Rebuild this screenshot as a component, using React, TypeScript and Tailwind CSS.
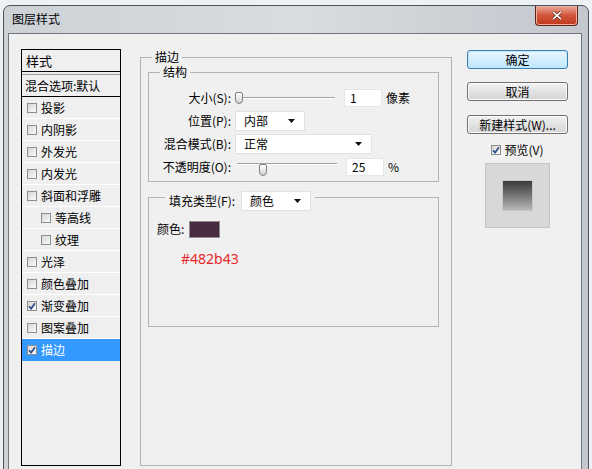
import type { ReactNode } from 'react'

type Layer = { name: string; checked?: boolean; sub?: boolean; active?: boolean }

const layers: Layer[] = [
    { name: '投影' },
    { name: '内阴影' },
    { name: '外发光' },
    { name: '内发光' },
    { name: '斜面和浮雕' },
    { name: '等高线', sub: true },
    { name: '纹理', sub: true },
    { name: '光泽' },
    { name: '颜色叠加' },
    { name: '渐变叠加', checked: true },
    { name: '图案叠加' },
    { name: '描边', checked: true, active: true },
]

function Check({ checked = false }: { checked?: boolean }) {
    return (
        <span className="flex h-[10px] w-[10px] shrink-0 items-center justify-center border border-[#8e8f8f] bg-gradient-to-br from-[#d6d6d6] to-[#fafafa]">
            {checked && (
                <svg viewBox="0 0 8 8" className="h-[8px] w-[8px]">
                    <path d="M1 4.2 L3.1 6.6 L7 1.2" fill="none" stroke="#2b4c8c" strokeWidth="1.7" />
                </svg>
            )}
        </span>
    )
}

function Arrow() {
    return (
        <svg viewBox="0 0 7 4" className="h-[4px] w-[7px]">
            <path d="M0 0 H7 L3.5 4 Z" fill="#111" />
        </svg>
    )
}

function Select({ value, width }: { value: string; width: string }) {
    return (
        <div className={`flex h-[20px] items-center justify-between border border-[#e2e2e2] bg-white pl-[8px] pr-[9px] text-[12px] ${width}`}>
            <span>{value}</span>
            <Arrow />
        </div>
    )
}

function Slider({ thumb }: { thumb: string }) {
    return (
        <div className="relative h-[14px] w-[100px]">
            <div className="mt-[6px] h-[2px] border-t border-b border-t-[#a3a3a3] border-b-white" />
            <div className={`absolute top-[1px] h-[12px] w-[8px] rounded-t-[2px] rounded-b-[4px] border border-[#808080] bg-gradient-to-b from-white to-[#d2d2d2] ${thumb}`} />
        </div>
    )
}

function Field({ value }: { value: string }) {
    return (
        <div className="flex h-[18px] w-[38px] items-center border border-[#e6e6e6] bg-white pl-[5px] text-[12px]">
            {value}
        </div>
    )
}

function Row({ label, children }: { label: string; children: ReactNode }) {
    return (
        <div className="flex h-[20px] items-center">
            <span className="w-[82px] text-right text-[12px]">{label}</span>
            <div className="ml-[4px] flex items-center">{children}</div>
        </div>
    )
}

function Button({ children, primary = false }: { children: ReactNode; primary?: boolean }) {
    return (
        <button
            className={
                primary
                    ? 'h-[19px] w-[101px] rounded-[3px] border border-[#3c7fb1] bg-gradient-to-b from-[#eaf6fd] to-[#bee6fd] text-[12px] leading-[17px] shadow-[inset_0_0_0_1px_#bfe6fb]'
                    : 'h-[19px] w-[101px] rounded-[3px] border border-[#707070] bg-gradient-to-b from-[#f2f2f2] to-[#d4d4d4] text-[12px] leading-[17px] shadow-[inset_0_0_0_1px_#fbfbfb]'
            }
        >
            {children}
        </button>
    )
}

export default function App() {
    return (
        <div className="h-[469px] w-[592px] overflow-hidden bg-[#eef1f4] font-['Noto_Sans_CJK_SC',sans-serif] text-black">
            {/* window frame */}
            <div className="ml-[3px] mt-[5px] flex h-[480px] w-[586px] flex-col rounded-t-[7px] border border-[#4d545c] bg-gradient-to-r from-[#cdd2d7] via-[#d9dce0] to-[#c3c8ce]">
                <div className="flex h-[27px] items-start justify-between pl-[8px] pr-[10px]">
                    <span className="mt-[5px] text-[12px] leading-[16px]">图层样式</span>
                    <button className="flex h-[20px] w-[43px] items-center justify-center rounded-b-[4px] border border-t-0 border-[#5f2519] bg-gradient-to-b from-[#e9a898] via-[#d2553b] to-[#c0381c] shadow-[inset_0_0_0_1px_#f0b0a0]">
                        <svg viewBox="0 0 10 9" className="h-[9px] w-[10px]">
                            <path d="M1 0.8 L9 8.2 M9 0.8 L1 8.2" stroke="#5a1d12" strokeWidth="3" />
                            <path d="M1 0.8 L9 8.2 M9 0.8 L1 8.2" stroke="#fff" strokeWidth="1.7" />
                        </svg>
                    </button>
                </div>

                {/* client area */}
                <div className="ml-[4px] mr-[6px] flex flex-1 border border-[#6f767d] bg-[#f0f0f0] pl-[12px] pt-[15px]">
                    {/* styles list */}
                    <div className="h-[417px] w-[100px] border border-black bg-[#efefef] text-[12px]">
                        <div className="flex h-[22px] items-center border-b border-black pl-[4px] text-[13px]">样式</div>
                        <div className="h-[3px] border-b border-[#9a9a9a]" />
                        <div className="flex h-[22px] items-center border-b border-black pl-[3px]">混合选项:默认</div>
                        {layers.map((l) => (
                            <div
                                key={l.name}
                                className={`flex h-[22px] items-center gap-[4px] border-b ${
                                    l.active ? 'border-[#3399ff] bg-[#3399ff] text-white' : 'border-white'
                                } ${l.sub ? 'pl-[19px]' : 'pl-[5px]'}`}
                            >
                                <Check checked={l.checked} />
                                <span>{l.name}</span>
                            </div>
                        ))}
                    </div>

                    {/* stroke group */}
                    <fieldset className="ml-[19px] mt-[1px] h-[416px] w-[312px] border border-[#b4b4b4] px-[7px]">
                        <legend className="ml-[4px] px-[3px] text-[12px] leading-[14px]">描边</legend>

                        <fieldset className="w-[291px] border border-[#b4b4b4] pb-[4px]">
                            <legend className="ml-[11px] px-[3px] text-[12px] leading-[16px]">结构</legend>
                            <div className="flex flex-col gap-[3px] pt-[8px]">
                                <Row label="大小(S):">
                                    <Slider thumb="left-0" />
                                    <div className="ml-[9px]">
                                        <Field value="1" />
                                    </div>
                                    <span className="ml-[4px] text-[12px]">像素</span>
                                </Row>
                                <Row label="位置(P):">
                                    <Select value="内部" width="w-[70px]" />
                                </Row>
                                <Row label="混合模式(B):">
                                    <Select value="正常" width="w-[137px]" />
                                </Row>
                                <Row label="不透明度(O):">
                                    <div className="ml-[2px]">
                                        <Slider thumb="left-[22px]" />
                                    </div>
                                    <div className="ml-[9px]">
                                        <Field value="25" />
                                    </div>
                                    <span className="ml-[4px] text-[12px]">%</span>
                                </Row>
                            </div>
                        </fieldset>

                        <fieldset className="mt-[1px] h-[144px] w-[291px] border border-[#b4b4b4]">
                            <legend className="ml-[16px] flex items-center gap-[6px] px-[4px] pt-[8px] text-[12px]">
                                <span>填充类型(F):</span>
                                <Select value="颜色" width="w-[70px]" />
                            </legend>
                            <div className="pl-[8px] pt-[10px]">
                                <div className="flex h-[16px] items-center text-[12px]">
                                    <span>颜色:</span>
                                    <span className="ml-[5px] h-[17px] w-[31px] border border-[#8c8c8c] bg-[#482b43]" />
                                </div>
                                <div className="ml-[24px] mt-[14px] font-['Noto_Sans',sans-serif] text-[14px] leading-[16px] text-[#e8262d]">
                                    #482b43
                                </div>
                            </div>
                        </fieldset>
                    </fieldset>

                    {/* buttons + preview */}
                    <div className="ml-[15px] mt-[1px] flex w-[101px] flex-col">
                        <Button primary>确定</Button>
                        <div className="mt-[9px]">
                            <Button>取消</Button>
                        </div>
                        <div className="mt-[9px]">
                            <Button>新建样式(W)...</Button>
                        </div>
                        <label className="mt-[7px] flex h-[16px] items-center justify-center gap-[3px] text-[12px]">
                            <Check checked />
                            <span>预览(V)</span>
                        </label>
                        <div className="ml-[18px] mt-[5px] flex h-[65px] w-[65px] items-center justify-center border border-[#c4c4c4] bg-[#d8d8d8]">
                            <div className="h-[31px] w-[31px] border border-[#c9c9c9] bg-gradient-to-b from-[#3a3a3a] to-[#b8b8b8]" />
                        </div>
                    </div>
                </div>
            </div>
        </div>
    )
}
